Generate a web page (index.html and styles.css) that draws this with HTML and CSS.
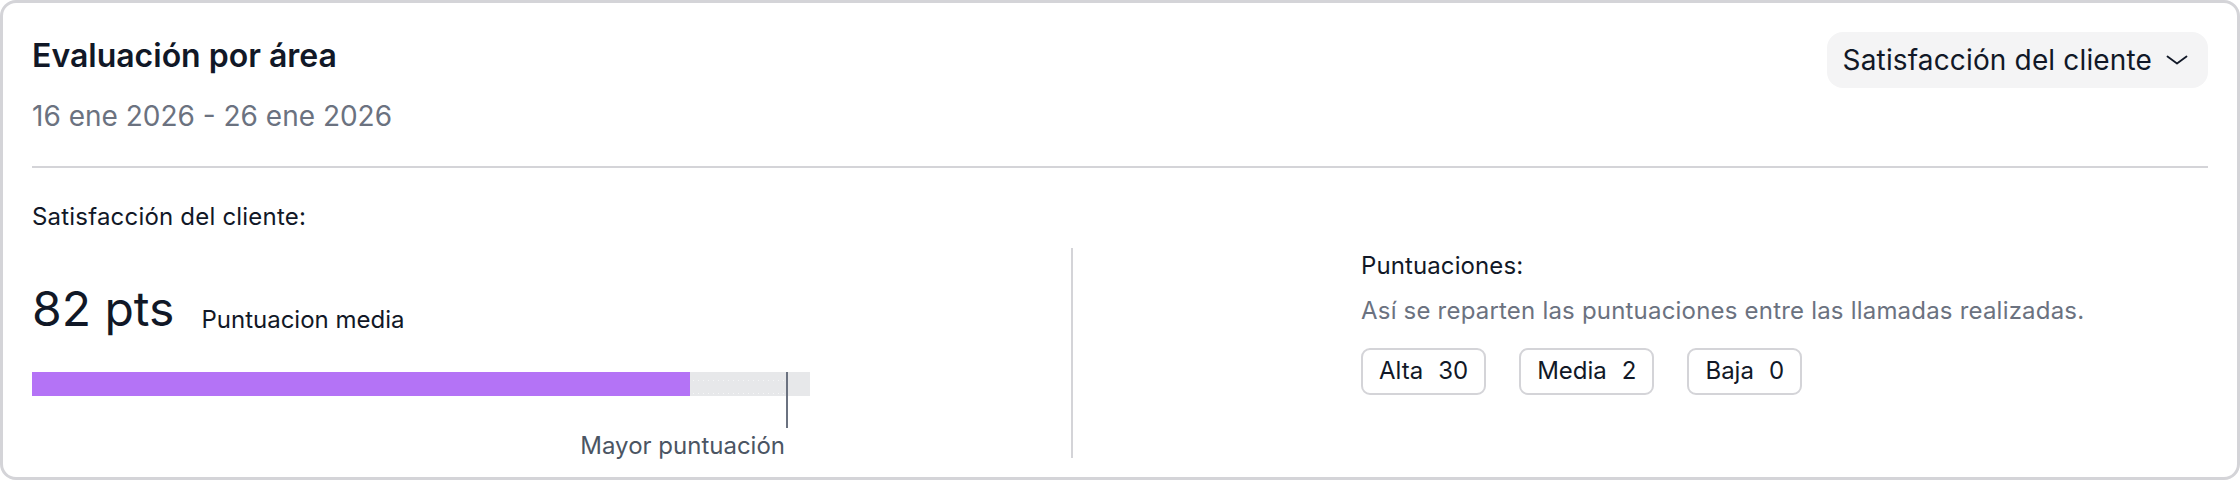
FILE: index.html
```html
<!DOCTYPE html>
<html lang="es">
<head>
<meta charset="utf-8">
<title>Evaluación por área</title>
<link rel="stylesheet" href="styles.css">
</head>
<body>
<div class="card">
  <div class="header">
    <div class="heading">
      <h1 class="title">Evaluación por área</h1>
      <div class="date">16 ene 2026 - 26 ene 2026</div>
    </div>
    <button class="select" type="button">
      <span>Satisfacción del cliente</span>
      <svg class="chev" width="24" height="24" viewBox="0 0 24 24" fill="none" stroke="currentColor" stroke-width="1.8" stroke-linecap="round" stroke-linejoin="round"><polyline points="2.5,8.5 12,15.5 21.5,8.5"/></svg>
    </button>
  </div>
  <div class="rule"></div>
  <div class="section-label">Satisfacción del cliente:</div>
  <div class="body">
    <div class="left">
      <div class="score"><span class="big">82 pts</span><span class="avg">Puntuacion media</span></div>
      <div class="scale">
        <div class="bar">
          <div class="fill" style="width:658px"></div>
          <div class="gap-dots" style="width:96px"></div>
          <div class="rest"></div>
        </div>
        <div class="marker" style="left:754px"></div>
        <div class="scale-label" style="width:753px">Mayor puntuación</div>
      </div>
    </div>
    <div class="vrule"></div>
    <div class="right">
      <div class="r-title">Puntuaciones:</div>
      <div class="r-desc">Así se reparten las puntuaciones entre las llamadas realizadas.</div>
      <div class="pills">
        <div class="pill"><span>Alta</span><span>30</span></div>
        <div class="pill"><span>Media</span><span>2</span></div>
        <div class="pill"><span>Baja</span><span>0</span></div>
      </div>
    </div>
  </div>
</div>
</body>
</html>
```
FILE: styles.css
```css
* { box-sizing: border-box; }
html, body { margin: 0; padding: 0; background: #ffffff; }
body { font-family: Inter, "Noto Sans", "Liberation Sans", sans-serif; color: #111827; }

.card {
  width: 2240px;
  height: 480px;
  border: 3px solid #d4d4d8;
  border-radius: 16px;
  padding: 29px 29px 0 29px;
  background: #ffffff;
}

.header {
  display: flex;
  justify-content: space-between;
  align-items: flex-start;
}
.title {
  margin: 0;
  font-size: 32px;
  line-height: 48px;
  font-weight: 600;
  color: #111827;
}
.date {
  margin-top: 16px;
  font-size: 28px;
  line-height: 40px;
  color: #6b7280;
}
.select {
  display: flex;
  align-items: center;
  gap: 13px;
  height: 56px;
  padding: 0 19px 0 16px;
  border: 0;
  border-radius: 16px;
  background: #f4f4f5;
  font-family: inherit;
  font-size: 28px;
  line-height: 40px;
  letter-spacing: 0.15px;
  color: #111827;
}
.chev { display: block; color: #111827; }

.rule {
  margin-top: 30px;
  height: 2px;
  background: #d4d4d8;
}
.section-label {
  margin-top: 33px;
  font-size: 24px;
  line-height: 32px;
  letter-spacing: 0.2px;
  color: #111827;
}

.body {
  display: flex;
  align-items: flex-start;
  margin-top: 15px;
}
.left {
  width: 1039px;
  padding-top: 32px;
}
.score {
  font-size: 48px;
  line-height: 58px;
  white-space: nowrap;
}
.big {
  color: #111827;
}
.avg {
  font-size: 24px;
  line-height: 24px;
  margin-left: 27px;
  vertical-align: -2px;
  color: #111827;
}
.scale {
  position: relative;
  width: 778px;
  margin-top: 34px;
}
.bar {
  display: flex;
  height: 24px;
  background: #e7e8ea;
}
.fill { background: #b473f6; height: 100%; }
.gap-dots {
  height: 100%;
  background-image: radial-gradient(circle, rgba(255,255,255,0.6) 0.6px, transparent 1px);
  background-size: 5px 13px;
  background-position: 6px 2px;
}
.rest { flex: 1; }
.marker {
  position: absolute;
  top: 0;
  width: 2px;
  height: 56px;
  background: #6b7280;
}
.scale-label {
  margin-top: 34px;
  text-align: right;
  font-size: 24px;
  line-height: 32px;
  color: #4b5563;
}

.vrule {
  width: 2px;
  height: 210px;
  background: #d4d4d8;
  flex: none;
}
.right {
  padding-left: 288px;
  padding-top: 2px;
}
.r-title {
  font-size: 24px;
  line-height: 32px;
  letter-spacing: 0.1px;
  color: #111827;
}
.r-desc {
  margin-top: 13px;
  font-size: 24px;
  line-height: 32px;
  letter-spacing: 0.2px;
  color: #6b7280;
}
.pills {
  display: flex;
  gap: 33px;
  margin-top: 21px;
}
.pill {
  display: flex;
  gap: 15px;
  padding: 5px 16px 6px;
  border: 2px solid #d4d4d8;
  border-radius: 9px;
  font-size: 24px;
  line-height: 32px;
  color: #111827;
}
```
